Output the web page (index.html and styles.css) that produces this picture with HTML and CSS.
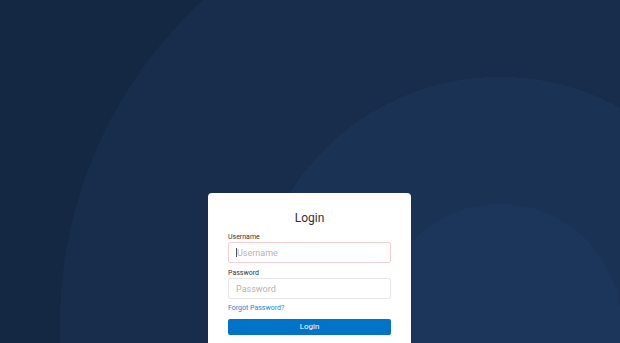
FILE: index.html
```html
<!DOCTYPE html>
<html lang="en">
<head>
<meta charset="utf-8">
<title>Login</title>
<link rel="stylesheet" href="styles.css">
</head>
<body>
<main class="page">
  <form class="card">
    <h1 class="title">Login</h1>
    <label class="label" for="u">Username</label>
    <div class="input input-invalid"><span class="caret"></span><span class="ph">Username</span></div>
    <label class="label" for="p">Password</label>
    <div class="input"><span class="ph">Password</span></div>
    <a class="forgot" href="#">Forgot Password?</a>
    <div class="btn">Login</div>
  </form>
</main>
</body>
</html>
```
FILE: styles.css
```css
html, body {
  margin: 0;
  padding: 0;
  height: 100%;
}
body {
  font-family: Roboto, "Liberation Sans", sans-serif;
  background: radial-gradient(circle at 500px 325px,
    #1c365b 0, #1c365b 121px,
    #1a3253 121px, #1a3253 248px,
    #182d4c 248px, #182d4c 440px,
    #152843 440px);
  overflow: hidden;
}
.page {
  display: flex;
  justify-content: center;
  padding: 193px 1px 0 0;
  height: 100%;
  box-sizing: border-box;
}
.card {
  width: 203px;
  background: #fff;
  border-radius: 4px 4px 0 0;
  padding: 18px 20px 0;
  box-sizing: border-box;
  display: flex;
  flex-direction: column;
}
.title {
  margin: 0 0 7px;
  font-size: 12px;
  line-height: 14px;
  font-weight: 400;
  color: #333;
  text-align: center;
}
.label {
  font-size: 7px;
  line-height: 10px;
  color: #333;
}
.input {
  height: 21px;
  border: 1px solid #e6e6e6;
  border-radius: 2px;
  box-sizing: border-box;
  display: flex;
  align-items: center;
  padding-left: 7px;
  margin-bottom: 5px;
}
.input-invalid {
  border-color: #f6cfd4;
}
.caret {
  width: 1px;
  height: 9px;
  background: #555;
}
.ph {
  font-size: 9px;
  color: #b3b3b3;
}
.forgot {
  font-size: 7px;
  line-height: 10px;
  color: #1b86d1;
  text-decoration: none;
  align-self: flex-start;
  margin-top: -1px;
}
.btn {
  margin-top: 6px;
  height: 16px;
  background: #0174c7;
  border-radius: 2px;
  color: #fff;
  font-size: 8px;
  line-height: 16px;
  text-align: center;
}
```
